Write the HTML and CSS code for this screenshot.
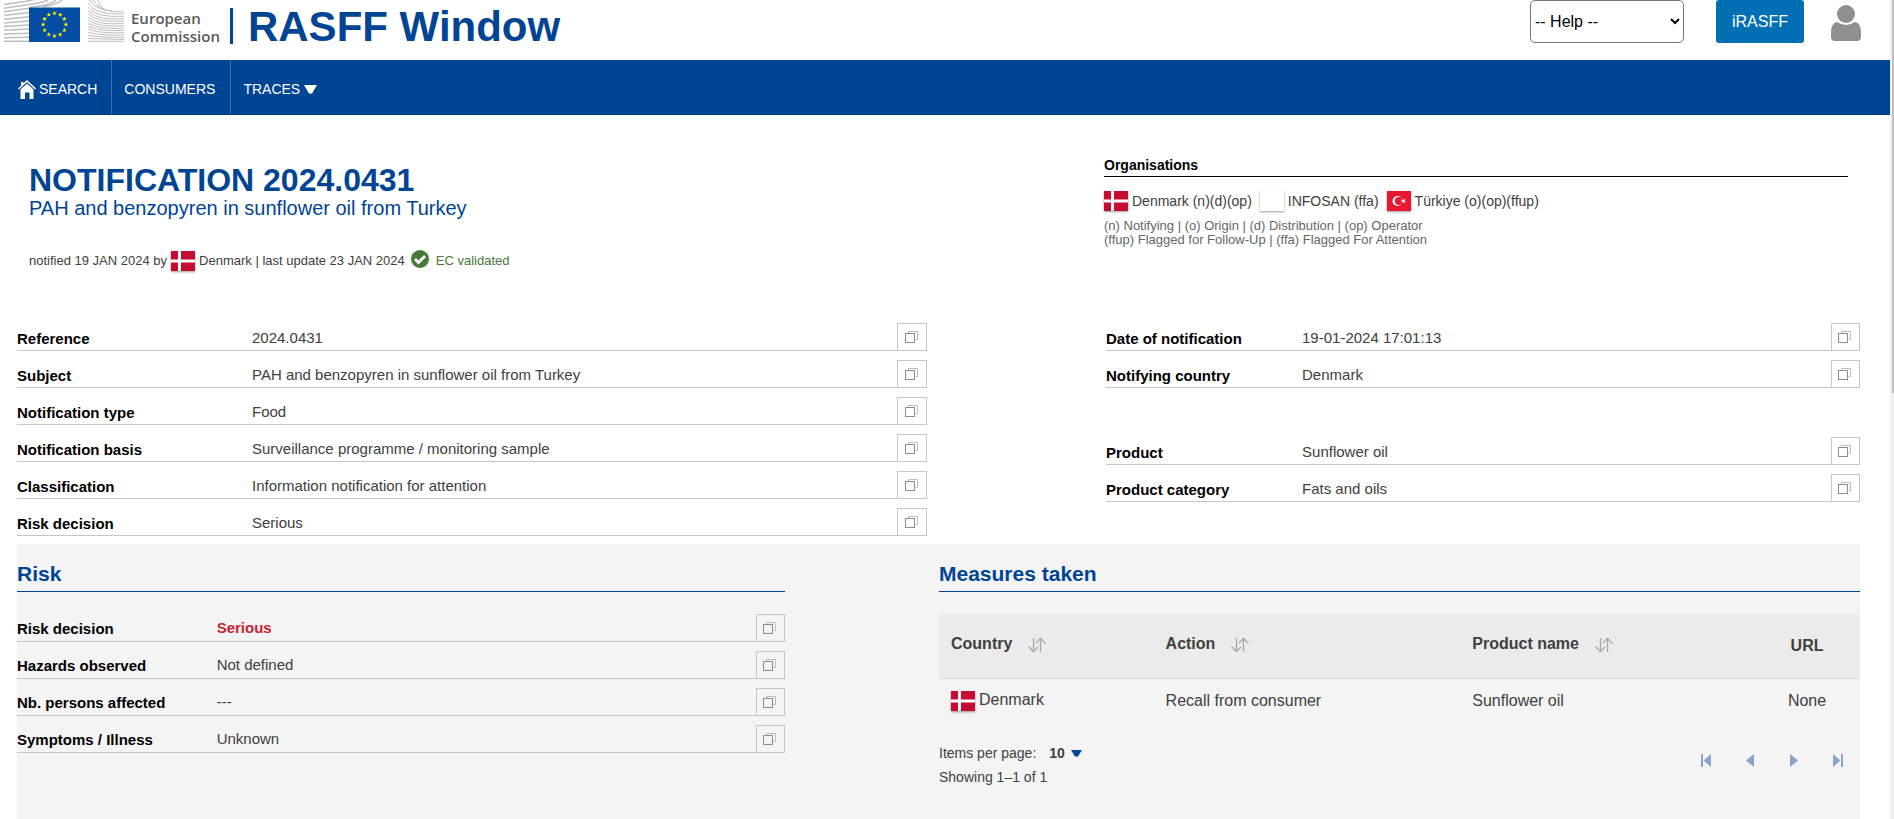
FILE: index.html
```html
<!DOCTYPE html>
<html lang="en">
<head>
<meta charset="utf-8">
<title>RASFF Window</title>
<link rel="stylesheet" href="styles.css">
</head>
<body>
<svg class="sprite" aria-hidden="true">
  <symbol id="copy" viewBox="0 0 13 12">
    <path d="M3.500 2V.5h9v8H10.500" fill="none" stroke="#bcbcc4"/>
    <rect x=".5" y="2.500" width="9" height="9" fill="none" stroke="#8c8c8c"/>
  </symbol>
  <symbol id="dk" viewBox="0 0 24 20" preserveAspectRatio="none">
    <rect width="24" height="20" fill="#c60c30"/>
    <path d="M7 0h3v20H7zM0 8.500h24v3H0z" fill="#fff"/>
  </symbol>
  <symbol id="tr" viewBox="0 0 24 20">
    <rect width="24" height="20" fill="#e91830"/>
    <circle cx="10.500" cy="10" r="5" fill="#fff"/>
    <circle cx="11.900" cy="10" r="4" fill="#e91830"/>
    <path d="M13.500 10l2-.7.1-2 1.200 1.600 2-.6-1.200 1.700 1.200 1.700-2-.6-1.200 1.600-.1-2z" fill="#fff"/>
  </symbol>
  <symbol id="sort" viewBox="0 0 18 16">
    <path d="M5.500 1v13.500M.5 9.500l5 5 4.500-4.500M12.500 15V1.500M8 6l4.500-4.500 5 5" fill="none" stroke="#a9a9a9" stroke-width="1.300"/>
  </symbol>
  <symbol id="star" viewBox="-5 -5 10 10"><path d="M0-5 1.200-1.600 4.800-1.500 1.900.6 2.900 4 0 2-2.900 4-1.900.6-4.800-1.500-1.200-1.600z" fill="#ffed00"/></symbol>
</svg>
<div class="page">
  <header class="header">
    <a class="brand" href="#" aria-label="European Commission">
      <svg class="brand-mark" viewBox="0 0 124 43" aria-hidden="true">
        <g fill="none" stroke="#bcbec0" stroke-width="1.500">
          <path d="M4 41.300h25M4 37.700l25-.4M4 34l25-.8M4 30.300l25-1.200M4 26.600l25-1.600M4 22.900l25-2M4 19.200l25-2.400M4 15.500l25-3M4 11.800l25-3.500M4 8.200l23-3.500Q42 3 48 0M4 4.500l21-3L33 0M30 7Q50 6 56 0M43 7Q56 5 62 0"/>
        </g>
        <g fill="none" stroke="#bcbec0" stroke-width="1">
          <path d="M88 41.300h36M88 38.500l36 1M88 35.500Q104 38 124 37.300M88 32.500Q104 36 124 35M88 29.500Q104 34 124 32.700M88 26.500Q103 32 124 30.300M88 23.500Q102 30 124 28M88 20.500Q101 28 124 25.700M88 17.500Q100 26 124 23.300M88 14Q98 23 124 21M88 10.500Q97 21 124 18.700M88 7Q95 18 124 16.300M88 3Q94 15 124 14M89 0Q96 12 124 12M93 0Q99 10 112 11M98 0Q101 8 105 9.500"/>
        </g>
        <rect x="29" y="7.500" width="51" height="34.500" fill="#034ea2"/>
        <g>
          <use href="#star" x="52" y="10.700" width="5" height="5"/>
          <use href="#star" x="57.700" y="12.200" width="5" height="5"/>
          <use href="#star" x="61.900" y="16.400" width="5" height="5"/>
          <use href="#star" x="63.400" y="22.100" width="5" height="5"/>
          <use href="#star" x="61.900" y="27.800" width="5" height="5"/>
          <use href="#star" x="57.700" y="32" width="5" height="5"/>
          <use href="#star" x="52" y="33.500" width="5" height="5"/>
          <use href="#star" x="46.300" y="32" width="5" height="5"/>
          <use href="#star" x="42.100" y="27.800" width="5" height="5"/>
          <use href="#star" x="40.600" y="22.100" width="5" height="5"/>
          <use href="#star" x="42.100" y="16.400" width="5" height="5"/>
          <use href="#star" x="46.300" y="12.200" width="5" height="5"/>
        </g>
      </svg>
      <span class="brand-text">European<br>Commission</span>
    </a>
    <h1 class="app-title">RASFF Window</h1>
    <div class="header-tools">
      <select class="help" aria-label="Help"><option>-- Help --</option></select>
      <button class="primary" type="button">iRASFF</button>
      <button class="user" type="button" aria-label="User account">
        <svg viewBox="0 0 30 36" aria-hidden="true"><g fill="#8f8f8f"><circle cx="15" cy="9" r="9"/><path d="M6 17q9 6 18 0 6 1 6 11v4q0 4-4 4H4q-4 0-4-4v-4q0-10 6-11z"/></g></svg>
      </button>
    </div>
  </header>

  <nav class="nav">
    <a href="#"><svg class="home" viewBox="0 0 18 19" aria-hidden="true"><path d="M9 0l9 8.500-1 1L9 2 1 9.500l-1-1L3 5.700V2h2.500v1.300z" fill="#fff"/><path d="M9 3.600l6.500 6V19h-4v-6.500H7V19H2.500V9.600z" fill="#fff"/></svg>SEARCH</a>
    <a href="#">CONSUMERS</a>
    <a href="#">TRACES<svg class="caret" viewBox="0 0 13 9" aria-hidden="true"><path d="M0 0h13L8 8.500H5z" fill="#fff"/></svg></a>
  </nav>

  <main class="main">
    <section class="intro">
      <div class="summary">
        <h2>NOTIFICATION 2024.0431</h2>
        <p class="subject">PAH and benzopyren in sunflower oil from Turkey</p>
        <p class="meta"><span>notified 19 JAN 2024 by</span><svg class="flag" aria-hidden="true"><use href="#dk"/></svg><span>Denmark | last update 23 JAN 2024</span>
          <svg class="check" viewBox="0 0 18 18" aria-hidden="true"><circle cx="9" cy="9" r="9" fill="#467a39"/><path d="M4 9l3.500 3.500L14 6" fill="none" stroke="#fff" stroke-width="2.800"/></svg><span class="valid">EC validated</span></p>
      </div>
      <div class="orgs">
        <h3>Organisations</h3>
        <ul>
          <li><svg class="flag" aria-hidden="true"><use href="#dk"/></svg>Denmark (n)(d)(op)</li>
          <li><span class="flag blank"></span>INFOSAN (ffa)</li>
          <li><svg class="flag" aria-hidden="true"><use href="#tr"/></svg>Türkiye (o)(op)(ffup)</li>
        </ul>
        <p class="legend">(n) Notifying | (o) Origin | (d) Distribution | (op) Operator<br>(ffup) Flagged for Follow-Up | (ffa) Flagged For Attention</p>
      </div>
    </section>

    <section class="details">
      <dl class="fields wide">
        <div><dt>Reference</dt><dd>2024.0431</dd><dd class="act"><button type="button" aria-label="Copy reference"><svg><use href="#copy"/></svg></button></dd></div>
        <div><dt>Subject</dt><dd>PAH and benzopyren in sunflower oil from Turkey</dd><dd class="act"><button type="button" aria-label="Copy subject"><svg><use href="#copy"/></svg></button></dd></div>
        <div><dt>Notification type</dt><dd>Food</dd><dd class="act"><button type="button" aria-label="Copy notification type"><svg><use href="#copy"/></svg></button></dd></div>
        <div><dt>Notification basis</dt><dd>Surveillance programme / monitoring sample</dd><dd class="act"><button type="button" aria-label="Copy notification basis"><svg><use href="#copy"/></svg></button></dd></div>
        <div><dt>Classification</dt><dd>Information notification for attention</dd><dd class="act"><button type="button" aria-label="Copy classification"><svg><use href="#copy"/></svg></button></dd></div>
        <div><dt>Risk decision</dt><dd>Serious</dd><dd class="act"><button type="button" aria-label="Copy risk decision"><svg><use href="#copy"/></svg></button></dd></div>
      </dl>
      <div class="groups">
        <dl class="fields">
          <div><dt>Date of notification</dt><dd>19-01-2024 17:01:13</dd><dd class="act"><button type="button" aria-label="Copy date"><svg><use href="#copy"/></svg></button></dd></div>
          <div><dt>Notifying country</dt><dd>Denmark</dd><dd class="act"><button type="button" aria-label="Copy country"><svg><use href="#copy"/></svg></button></dd></div>
        </dl>
        <dl class="fields">
          <div><dt>Product</dt><dd>Sunflower oil</dd><dd class="act"><button type="button" aria-label="Copy product"><svg><use href="#copy"/></svg></button></dd></div>
          <div><dt>Product category</dt><dd>Fats and oils</dd><dd class="act"><button type="button" aria-label="Copy category"><svg><use href="#copy"/></svg></button></dd></div>
        </dl>
      </div>
    </section>

    <div class="panel">
      <section>
        <h3>Risk</h3>
        <dl class="fields risk">
          <div><dt>Risk decision</dt><dd class="serious">Serious</dd><dd class="act"><button type="button" aria-label="Copy risk decision"><svg><use href="#copy"/></svg></button></dd></div>
          <div><dt>Hazards observed</dt><dd>Not defined</dd><dd class="act"><button type="button" aria-label="Copy hazards"><svg><use href="#copy"/></svg></button></dd></div>
          <div><dt>Nb. persons affected</dt><dd>---</dd><dd class="act"><button type="button" aria-label="Copy persons affected"><svg><use href="#copy"/></svg></button></dd></div>
          <div><dt>Symptoms / Illness</dt><dd>Unknown</dd><dd class="act"><button type="button" aria-label="Copy symptoms"><svg><use href="#copy"/></svg></button></dd></div>
        </dl>
      </section>
      <section>
        <h3>Measures taken</h3>
        <table class="measures">
          <thead>
            <tr>
              <th class="col-country">Country<svg class="sort" aria-hidden="true"><use href="#sort"/></svg></th>
              <th class="col-action">Action<svg class="sort" aria-hidden="true"><use href="#sort"/></svg></th>
              <th class="col-product">Product name<svg class="sort" aria-hidden="true"><use href="#sort"/></svg></th>
              <th class="col-url">URL</th>
            </tr>
          </thead>
          <tbody>
            <tr>
              <td><span class="country"><svg class="flag" aria-hidden="true"><use href="#dk"/></svg>Denmark</span></td>
              <td>Recall from consumer</td>
              <td>Sunflower oil</td>
              <td class="col-url">None</td>
            </tr>
          </tbody>
        </table>
        <div class="pager">
          <div>
            <label class="per-page">Items per page:
              <span class="size"><select><option>10</option></select><svg viewBox="0 0 11 7" aria-hidden="true"><path d="M0 0h11L7 6.500H4z" fill="#004494"/></svg></span>
            </label>
            <p>Showing 1–1 of 1</p>
          </div>
          <div class="pager-nav">
            <button type="button" aria-label="First page"><svg viewBox="0 0 10 13"><path d="M0 0h2v13H0zM10 0v13L2.500 6.500z"/></svg></button>
            <button type="button" aria-label="Previous page"><svg viewBox="0 0 10 13"><path d="M9 0v13L1 6.500z"/></svg></button>
            <button type="button" aria-label="Next page"><svg viewBox="0 0 10 13"><path d="M1 0v13l8-6.500z"/></svg></button>
            <button type="button" aria-label="Last page"><svg viewBox="0 0 10 13"><path d="M8 0h2v13H8zM0 0v13l7.500-6.500z"/></svg></button>
          </div>
        </div>
      </section>
    </div>
  </main>
</div>
<div class="scrollbar" aria-hidden="true"><div class="thumb"></div></div>
</body>
</html>
```

FILE: styles.css
```css
* { box-sizing: border-box; }

body {
  display: flex;
  height: 100vh;
  margin: 0;
  overflow: hidden;
  background: #fff;
  color: #404040;
  font: 15px/18px "Liberation Sans", Arial, sans-serif;
}

h1, h2, h3, p, ul, dl, dd { margin: 0; padding: 0; }
ul { list-style: none; }
button { padding: 0; border: 0; background: none; font: inherit; cursor: pointer; }
.sprite { position: absolute; width: 0; height: 0; }

.page { display: flex; flex: 1; flex-direction: column; min-width: 0; }

.scrollbar { width: 4px; padding-left: 2px; background: #f1f1f1; }
.thumb { height: 48%; background: #c1c1c1; }

/* Header */
.header { display: flex; align-items: flex-start; flex: none; height: 60px; padding-right: 29px; }
.brand {
  display: flex;
  gap: 7px;
  margin-right: 10px;
  color: #58595b;
  text-decoration: none;
}
.brand-mark { width: 124px; height: 43px; }
.brand-text { padding-top: 9px; font: 600 15px/18px "Open Sans", sans-serif; }
.app-title {
  margin-top: 8px;
  padding: 1px 0 0 15px;
  border-left: 3px solid #004494;
  color: #004494;
  font-size: 42px;
  line-height: 35px;
}
.header-tools { display: flex; margin-left: auto; }
.help {
  width: 154px;
  height: 43px;
  margin-right: 32px;
  border: 1px solid #767676;
  border-radius: 5px;
  background: #fff;
  color: #000;
  font: 16px "Liberation Sans", Arial, sans-serif;
}
.primary {
  width: 88px;
  height: 43px;
  margin-right: 27px;
  border-radius: 3px;
  background: #006fb4;
  color: #fff;
  font-size: 16px;
}
.user { margin-top: 3px; }
.user svg { display: block; width: 30px; height: 36px; }

/* Navigation */
.nav { display: flex; flex: none; height: 55px; border-bottom: 1px solid #003a80; background: #004494; }
.nav a {
  display: flex;
  align-items: center;
  padding: 4px 15px 0 12px;
  color: #fff;
  font-size: 14px;
  text-decoration: none;
}
.nav a + a { border-left: 1px solid #4073af; }
.nav a:first-child { padding: 4px 14px 0 18px; }
.home { width: 18px; height: 19px; margin-right: 3px; }
.caret { width: 13px; height: 9px; margin-left: 4px; }

/* Title block */
.main { display: flex; flex: 1; flex-direction: column; padding: 0 30px 0 17px; }
.intro {
  display: grid;
  grid-template-columns: 1075fr 744fr;
  padding: 41px 12px 0;
  min-height: 208px;
}
.summary h2 { padding-top: 6px; color: #004494; font-size: 32px; line-height: 36px; }
.subject { color: #004494; font-size: 20px; line-height: 20px; }
.meta { display: flex; align-items: center; margin-top: 31px; font-size: 13px; line-height: 24px; }
.flag { display: block; flex: none; width: 24px; height: 20px; margin-right: 4px; box-shadow: 0 1px 2px #00000066; }
.meta .flag { margin: 0 4px; }
.check { width: 18px; height: 18px; margin: 0 7px 4px 6px; }
.valid { color: #467a39; }

.orgs h3 { padding-bottom: 2px; border-bottom: 1px solid #000; color: #000; font-size: 14px; line-height: 18px; }
.orgs ul { display: flex; gap: 8px; margin-top: 14px; font-size: 14px; line-height: 20px; }
.orgs li { display: flex; }
.legend { margin-top: 8px; color: #666; font-size: 13px; line-height: 14px; }

/* Field lists */
.details { display: grid; grid-template-columns: 910fr 754fr; column-gap: 179px; }
.groups { display: grid; gap: 49px; align-content: start; }
.fields { display: grid; gap: 9px; align-content: start; }
.fields > div { display: flex; height: 28px; border-bottom: 1px solid #c6c6c6; }
.fields dt { width: 26%; padding-top: 7px; color: #000; font-weight: bold; }
.wide dt { width: 235px; }
.fields dd { padding-top: 6px; }
.risk dt { padding-top: 6px; }
.risk dd { padding-top: 5px; }
.fields .act { margin-left: auto; padding: 0; }
.fields button {
  display: grid;
  place-items: center;
  width: 29px;
  height: 27px;
  padding-right: 2px;
  border: 1px solid #c6c6c6;
  border-bottom: 0;
}
.wide button { width: 30px; }
.fields button svg { width: 13px; height: 12px; }
.fields .serious { color: #c9202f; font-weight: bold; }

/* Lower panel */
.panel {
  display: grid;
  flex: 1;
  grid-template-columns: 768fr 921fr;
  column-gap: 154px;
  align-content: start;
  margin-top: 8px;
  padding-top: 16px;
  background: #f4f4f4;
}
.panel h3 {
  margin-bottom: 22px;
  padding: 4px 0 7px;
  border-bottom: 1px solid #004494;
  color: #004494;
  font-size: 21px;
  line-height: 20px;
}

.measures { width: 100%; border-collapse: collapse; table-layout: fixed; font-size: 16px; text-align: left; }
.measures th { height: 64px; padding: 0 12px 4px; border-bottom: 1px solid #ddd; background: #ebebeb; }
.measures td { height: 46px; padding: 0 12px; }
.col-country { width: 23.3%; }
.col-action { width: 33.3%; }
.col-product { width: 31.9%; }
.measures .col-url { padding: 0; text-align: center; }
.sort { width: 18px; height: 16px; margin-left: 16px; vertical-align: -4px; }
.country { display: flex; }

.pager { display: flex; align-items: flex-start; justify-content: space-between; padding: 20px 17px 0 0; font-size: 14px; }
.per-page { display: flex; gap: 13px; }
.pager p { margin-top: 6px; }
.size { display: flex; align-items: center; gap: 6px; }
.size select { padding: 0; border: 0; appearance: none; background: none; color: inherit; font: bold 14px "Liberation Sans", Arial, sans-serif; }
.size svg { width: 11px; height: 7px; }
.pager-nav { display: flex; gap: 34px; align-items: center; padding-top: 10px; }
.pager-nav svg { display: block; width: 10px; height: 13px; fill: #89a5cb; }
```
